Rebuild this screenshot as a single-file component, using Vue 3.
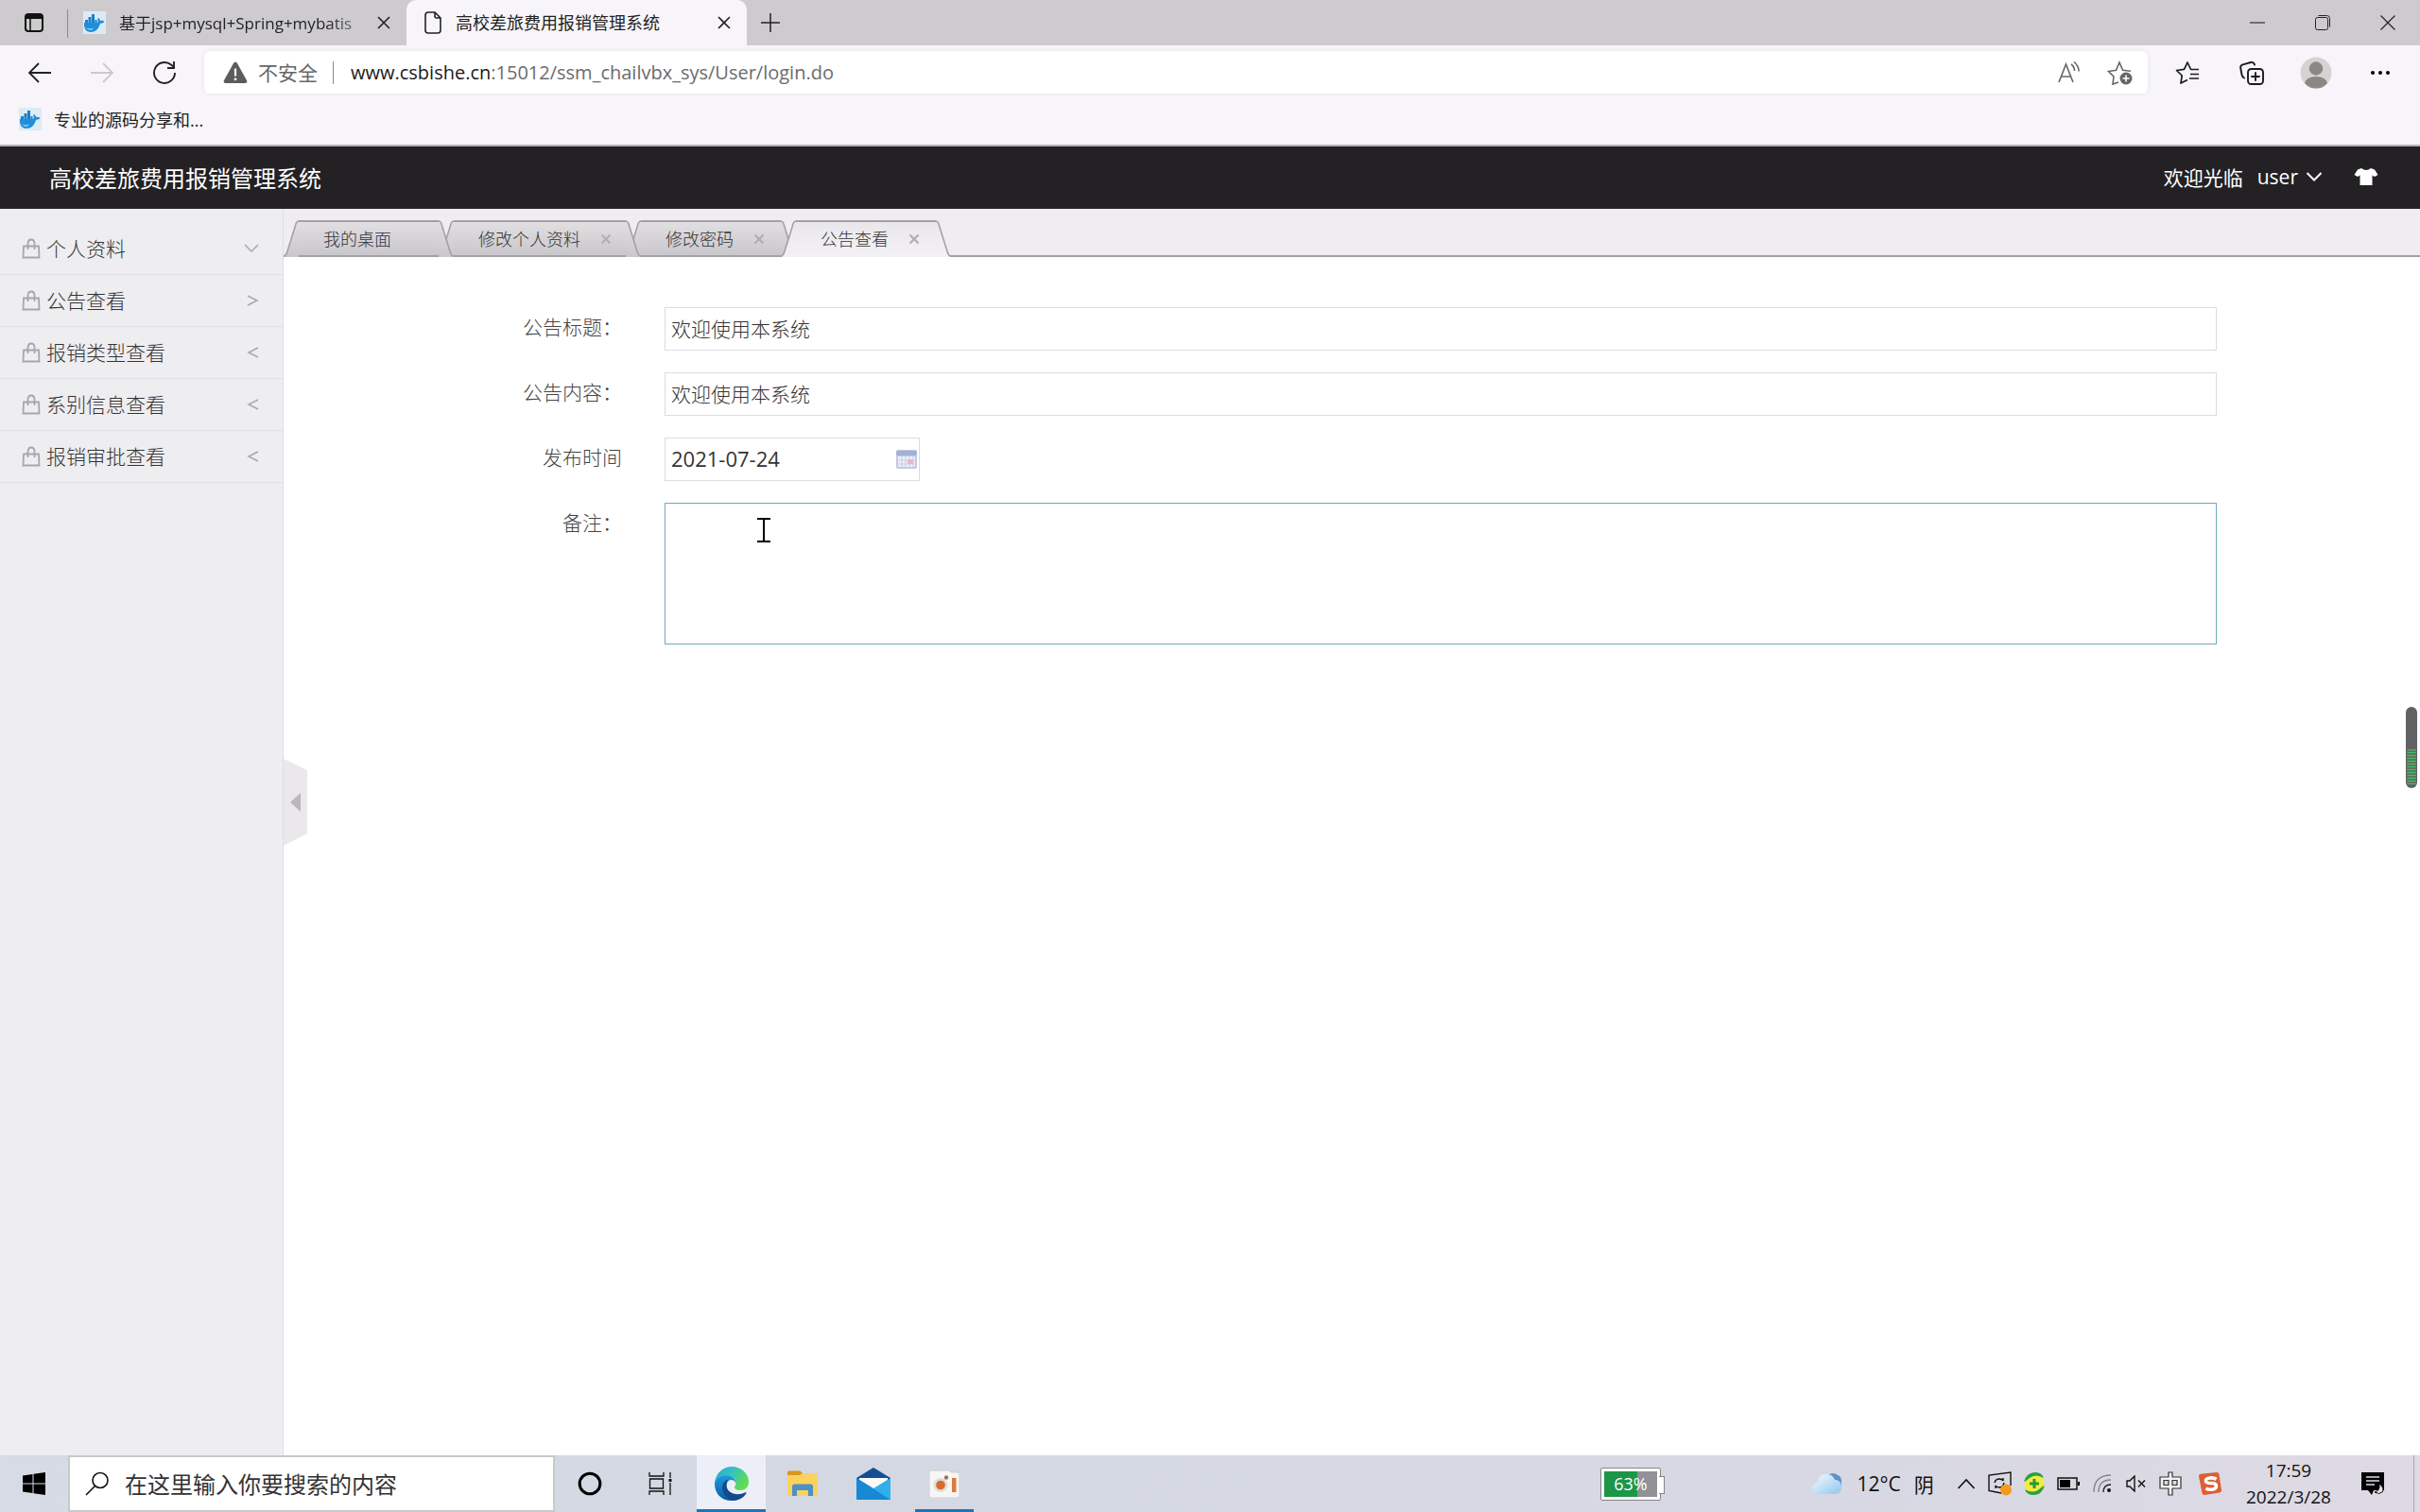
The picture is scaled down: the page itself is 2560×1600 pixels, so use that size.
<script setup>
import { ref } from 'vue'

const menu = [
  { name: '个人资料', arrow: 'down' },
  { name: '公告查看', arrow: 'right' },
  { name: '报销类型查看', arrow: 'left' },
  { name: '系别信息查看', arrow: 'left' },
  { name: '报销审批查看', arrow: 'left' }
]
const arrows = {
  down: 'M3 6l7 7 7-7',
  right: 'M6 5l10 5-10 5',
  left: 'M17 5L7 10l10 5'
}
const tabs = [
  { name: '我的桌面', closable: false },
  { name: '修改个人资料', closable: true },
  { name: '修改密码', closable: true },
  { name: '公告查看', closable: true }
]
const activeTab = 3

const title = ref('欢迎使用本系统')
const content = ref('欢迎使用本系统')
const date = ref('2021-07-24')
const remark = ref('')
</script>

<template>
  <div class="screen">
    <svg class="defs" width="0" height="0" aria-hidden="true">
      <defs>
        <linearGradient id="tabIdle" x1="0" y1="0" x2="0" y2="1">
          <stop offset="0" stop-color="#e2e0e3" /><stop offset="1" stop-color="#c9c7cb" />
        </linearGradient>
        <linearGradient id="tabActive" x1="0" y1="0" x2="0" y2="1">
          <stop offset="0" stop-color="#e9e7ea" /><stop offset="1" stop-color="#f3f1f5" />
        </linearGradient>
        <symbol id="whale" viewBox="0 0 24 24">
          <rect width="24" height="24" fill="#dcebf6" />
          <path d="M1 12h14c1-1 1-3 0-4l1-1c1.500 1 2 2 2 3 2-.5 3.500 0 4.500.8-1 1.500-2.500 2-4.500 2C16.500 19 12.500 22 8 22c-5 0-7.500-4-7-10z" fill="#1f8fdb" />
          <path d="M2 9h3v3H2zM5.500 6h3v6h-3zM9 6h3v6H9zM9 3h3v3H9zM12.500 9h2v3h-2z" fill="#1a7fca" />
          <path d="M3 17c3 2 6 2 8 0-1 3-5 4-8 0z" fill="#cfe6f6" />
        </symbol>
      </defs>
    </svg>

    <div class="tabstrip">
      <button class="workspace" aria-label="标签页操作">
        <svg width="22" height="22" viewBox="0 0 22 22"><rect x="2" y="2" width="18" height="18" rx="3" fill="none" stroke="#111" stroke-width="2" /><path d="M2 7V5q0-3 3-3h12q3 0 3 3v2z" fill="#111" /><path d="M7 7v13" stroke="#111" stroke-width="1.500" /></svg>
      </button>
      <i class="strip-line"></i>
      <div class="btab">
        <svg width="24" height="24"><use href="#whale" /></svg>
        <span class="btab-title faded">基于jsp+mysql+Spring+mybatis</span>
        <button class="bclose" aria-label="关闭标签页"><svg width="16" height="16" viewBox="0 0 16 16"><path d="M2 2l12 12M14 2L2 14" stroke="#222" stroke-width="1.600" /></svg></button>
      </div>
      <div class="btab current">
        <svg width="20" height="24" viewBox="0 0 20 24"><path d="M4 1h8l6 6v13q0 3-3 3H5q-3 0-3-3V4q0-3 3-3zM12 1v4q0 2 2 2h4" fill="none" stroke="#222" stroke-width="1.600" /></svg>
        <span class="btab-title">高校差旅费用报销管理系统</span>
        <button class="bclose" aria-label="关闭标签页"><svg width="16" height="16" viewBox="0 0 16 16"><path d="M2 2l12 12M14 2L2 14" stroke="#222" stroke-width="1.600" /></svg></button>
      </div>
      <button class="newtab" aria-label="新建标签页"><svg width="22" height="22" viewBox="0 0 22 22"><path d="M11 1v20M1 11h20" stroke="#222" stroke-width="1.500" /></svg></button>
      <div class="winbtns">
        <button aria-label="最小化"><svg width="18" height="18" viewBox="0 0 18 18"><path d="M1 9h16" stroke="#111" /></svg></button>
        <button aria-label="还原"><svg width="18" height="18" viewBox="0 0 18 18" fill="none" stroke="#222"><rect x="1.500" y="3.500" width="13" height="13" rx="2" /><path d="M4.500 1.500h9q3 0 3 3v9" /></svg></button>
        <button aria-label="关闭"><svg width="18" height="18" viewBox="0 0 18 18"><path d="M1.500 1.500l15 15M16.500 1.500l-15 15" stroke="#222" stroke-width="1.200" /></svg></button>
      </div>
    </div>

    <div class="toolbar">
      <button class="tool" aria-label="后退"><svg width="26" height="24" viewBox="0 0 26 24" fill="none" stroke="#222" stroke-width="1.800"><path d="M25 12H2M12 2L2 12l10 10" /></svg></button>
      <button class="tool" aria-label="前进"><svg width="26" height="24" viewBox="0 0 26 24" fill="none" stroke="#ccc9ce" stroke-width="1.800"><path d="M1 12h23M14 2l10 10-10 10" /></svg></button>
      <button class="tool" aria-label="刷新"><svg width="26" height="26" viewBox="0 0 26 26" fill="none" stroke="#222" stroke-width="1.900"><path d="M24 13A11 11 0 1 1 20 4.500L23 7M23 1v7h-7" /></svg></button>
      <div class="address">
        <svg width="26" height="26" viewBox="0 0 26 26"><path d="M13 1.500q1.200 0 2 1.500l10 18q1.200 3-1.500 3h-21q-2.700 0-1.500-3L11 3q.8-1.500 2-1.500z" fill="#5c5c5e" /><path d="M13 8.500v8" stroke="#fff" stroke-width="2.200" /><circle cx="13" cy="19.800" r="1.400" fill="#fff" /></svg>
        <span class="unsafe">不安全</span>
        <i class="addr-line"></i>
        <span class="url"><b>www.csbishe.cn</b>:15012/ssm_chailvbx_sys/User/login.do</span>
        <button aria-label="朗读"><svg width="26" height="26" viewBox="0 0 26 26" fill="none" stroke="#666" stroke-width="1.600"><path d="M2 23L9.500 4 17 23M4.800 17h9.500" /><path d="M15 4q3.500 2.500 3.500 7M18 1.500q5 4 5 10" /></svg></button>
        <button aria-label="收藏"><svg width="28" height="28" viewBox="0 0 28 28" fill="none" stroke="#666" stroke-width="1.600"><path d="M12 24l-6 2 1-8-5.500-5.500 8-1.200L13 3l3.600 8.300 8.400 1" /><circle cx="20" cy="20" r="6.500" fill="#666" stroke="none" /><path d="M20 16.500v7M16.500 20h7" stroke="#fff" /></svg></button>
      </div>
      <button class="side" aria-label="收藏夹"><svg width="26" height="26" viewBox="0 0 26 26" fill="none" stroke="#1b1b1b" stroke-width="1.700" stroke-linejoin="round"><path d="M13 20.500L6 24l1.200-8L1.500 10.500l8-1.200L13 2l3.600 7.500H25M16 14.500h9M15 19h10" /></svg></button>
      <button class="side" aria-label="集锦"><svg width="28" height="28" viewBox="0 0 28 28" fill="none" stroke="#1b1b1b" stroke-width="1.900" stroke-linecap="round"><rect x="10" y="10" width="16" height="16" rx="3.500" /><path d="M18 14v8M14 18h8M6 19.500q-2-1-2.500-3.500L2.200 9Q1.700 6 4.500 5.300L13 3q3-.6 4 2.500" /></svg></button>
      <button class="side" aria-label="用户"><svg width="34" height="34" viewBox="0 0 34 34"><circle cx="17" cy="17" r="16.500" fill="#d5d3d1" /><circle cx="17" cy="12.500" r="7.200" fill="#8b8785" /><path d="M5 28q2-7 12-7t12 7q-4.500 5.500-12 5.500T5 28z" fill="#8b8785" /></svg></button>
      <button class="side" aria-label="更多"><svg width="22" height="6" viewBox="0 0 22 6"><circle cx="3" cy="3" r="2" /><circle cx="11" cy="3" r="2" /><circle cx="19" cy="3" r="2" /></svg></button>
    </div>

    <div class="bookmarks">
      <a href="#"><svg width="24" height="24"><use href="#whale" /></svg>专业的源码分享和...</a>
    </div>

    <header class="apphead">
      <h1>高校差旅费用报销管理系统</h1>
      <span class="welcome">欢迎光临</span>
      <button class="user">user<svg width="18" height="12" viewBox="0 0 18 12"><path d="M1.500 2L9 9.500 16.500 2" fill="none" stroke="#fff" stroke-width="2" /></svg></button>
      <button class="skin" aria-label="换肤"><svg width="26" height="20" viewBox="0 0 26 20"><path d="M8 1q5 4 10 0l4 1.500L25.500 8 22 10l-2.500-1.500V19h-13V8.500L4 10 .5 8 4 2.500z" fill="#fff" /></svg></button>
    </header>

    <div class="body">
      <nav class="sidebar">
        <a v-for="m in menu" :key="m.name" href="#">
          <svg width="20" height="22" viewBox="0 0 20 22" fill="none" stroke="#a7a5b0" stroke-width="1.800"><path d="M2 8.500h16l.5 12h-17zM6.500 12V6q0-4.500 3.500-4.500T13.500 6v6" /></svg>
          <span>{{ m.name }}</span>
          <svg width="20" height="20" viewBox="0 0 20 20"><path :d="arrows[m.arrow]" fill="none" stroke="#a9a8ac" stroke-width="1.500" /></svg>
        </a>
      </nav>

      <main class="main">
        <button class="fold" aria-label="收起菜单">
          <svg width="26" height="92" viewBox="0 0 26 92"><path d="M0 0l25 12v67L0 92z" fill="#ebe8ec" /><path d="M7 46l11-10v20z" fill="#b9b7bb" /></svg>
        </button>
        <ul class="tabs">
          <li v-for="(t, i) in tabs" :key="t.name" :class="{ active: i === activeTab }" :style="{ zIndex: i === activeTab ? 9 : 8 - i }">
            <svg width="16" height="39" viewBox="0 0 16 39">
              <path d="M0 39Q3 37 4 33L13 4Q14 .5 16 .5V39z" :fill="i === activeTab ? 'url(#tabActive)' : 'url(#tabIdle)'" />
              <path d="M0 38.500Q3 37 4 33L13 4Q14 1 16 1" fill="none" stroke="#a3a1a6" stroke-width="1.600" />
            </svg>
            <div class="mid">
              <a href="#">{{ t.name }}</a>
              <button v-if="t.closable" aria-label="关闭"><svg width="12" height="12" viewBox="0 0 12 12"><path d="M1.500 1.500l9 9M10.500 1.500l-9 9" stroke="#b1afb3" stroke-width="2.200" /></svg></button>
            </div>
            <svg width="16" height="39" viewBox="0 0 16 39">
              <path d="M16 39Q13 37 12 33L3 4Q2 .5 0 .5V39z" :fill="i === activeTab ? 'url(#tabActive)' : 'url(#tabIdle)'" />
              <path d="M16 38.500Q13 37 12 33L3 4Q2 1 0 1" fill="none" stroke="#a3a1a6" stroke-width="1.600" />
            </svg>
          </li>
        </ul>

        <form class="form" @submit.prevent>
          <label for="title">公告标题：</label>
          <input id="title" v-model="title" type="text">
          <label for="content">公告内容：</label>
          <input id="content" v-model="content" type="text">
          <label for="date">发布时间</label>
          <div class="date">
            <input id="date" v-model="date" type="text">
            <svg width="22" height="20" viewBox="0 0 22 20"><rect width="22" height="20" rx="2" fill="#c3c9e0" /><rect y="1" width="22" height="5" rx="2" fill="#a3b0da" /><rect x="2" y="7" width="18" height="11" fill="#eef1fa" /><path d="M2 11h18M2 15h18M6 7v11M10 7v11M14 7v11M18 7v11" stroke="#c5cce6" /><rect x="12" y="10" width="6" height="5" fill="#e6bcc2" /></svg>
          </div>
          <label for="remark">备注：</label>
          <div class="remark">
            <textarea id="remark" v-model="remark"></textarea>
            <svg class="caret" width="14" height="26" viewBox="0 0 14 26"><path d="M0 1h14M0 25h14M7 1v24" stroke="#000" stroke-width="2" /></svg>
          </div>
        </form>

        <svg class="gauge" width="12" height="86" viewBox="0 0 12 86">
          <rect width="12" height="86" rx="6" fill="#626163" />
          <path d="M6 45v37" stroke="#4fc46c" stroke-width="9" stroke-dasharray="1 2" />
          <rect x="1" y="45" width="10" height="37" fill="#3fae5c" opacity=".3" />
        </svg>
      </main>
    </div>

    <footer class="taskbar">
      <button class="start" aria-label="开始"><svg width="24" height="24" viewBox="0 0 24 24"><path d="M0 3.500l10.500-1.500v9.500H0zM11.500 1.800L24 0v11.500H11.500zM0 12.500h10.500V22L0 20.500zM11.500 12.500H24V24l-12.500-1.800z" /></svg></button>
      <div class="search">
        <svg width="26" height="26" viewBox="0 0 26 26" fill="none" stroke="#111" stroke-width="1.600"><circle cx="16" cy="9.500" r="8" /><path d="M10.500 15.500L1 25" /></svg>
        <input type="text" aria-label="搜索" placeholder="在这里输入你要搜索的内容">
      </div>
      <div class="apps">
        <button class="app" aria-label="Cortana"><svg width="26" height="26" viewBox="0 0 24 24"><circle cx="12" cy="12" r="10" fill="none" stroke="#000" stroke-width="2.800" /></svg></button>
        <button class="app" aria-label="任务视图"><svg width="26" height="24" viewBox="0 0 26 24" fill="none" stroke="#111" stroke-width="1.300"><path d="M1 0v4h15V0M1 24v-4h15v4M1.500 7h14v10h-14zM23 0v6M23 11v13" /><path d="M21.500 7h3v3h-3z" fill="#111" stroke="none" /></svg></button>
        <button class="app focused" aria-label="Edge">
          <svg width="38" height="38" viewBox="0 0 38 38">
            <defs>
              <linearGradient id="eg1" x1="0" y1="0" x2="1" y2=".5"><stop offset="0" stop-color="#2aa5d8" /><stop offset=".5" stop-color="#33c3c0" /><stop offset="1" stop-color="#62dc52" /></linearGradient>
              <linearGradient id="eg2" x1="0" y1="0" x2="0" y2="1"><stop offset="0" stop-color="#1c9ade" /><stop offset="1" stop-color="#0c59a4" /></linearGradient>
            </defs>
            <path d="M1 18C2 8 10 1 19 1c11 0 18 8 18 16 0 6-4 9-9 9-4 0-6-1.500-6-3 0-1 1.500-2 1.500-5 0-4-4-7-9-7C8 11 3 14 1 18z" fill="url(#eg1)" />
            <path d="M1 18c2-5 7-7.500 12-7.500 6 0 10.500 3.500 10.500 8-1-2.500-3-3.500-5-3.500-3 0-5 3-5 6.500 0 8 8 12 15 9.500-3 4-7 6-10 6C8 37 .5 29 1 18z" fill="url(#eg2)" />
            <path d="M13.500 15c-4 3-5 7-4 11 2 7 7 11 12 11 6-.5 11-4 13-8 .3-.8-.3-1-1-.7-9 4.500-20 .7-20-7.800 0-2.200.5-4 1.500-5.500z" fill="#114a8d" />
          </svg>
        </button>
        <button class="app" aria-label="文件资源管理器"><svg width="34" height="28" viewBox="0 0 34 28"><path d="M1 2q0-1.500 1.500-1.500h12L17 3l-2 3H1z" fill="#d9971e" /><path d="M1 5h13l3-2h14q2 0 2 2v20q0 2-2 2H3q-2 0-2-2z" fill="#fbd25e" /><path d="M6 27V17q0-2.500 2.500-2.500h17Q28 14.500 28 17v10h-5v-6H11v6z" fill="#4a91c8" /></svg></button>
        <button class="app" aria-label="邮件"><svg width="36" height="34" viewBox="0 0 36 34"><path d="M0 11L18 0l18 11v8H0z" fill="#124f97" /><path d="M3 11h30v8L18 26 3 19z" fill="#fafafa" /><path d="M0 11l18 11L36 11v23H0z" fill="#2fb0e8" /><path d="M0 11l36 23H0z" fill="#1887d4" /></svg></button>
        <button class="app running" aria-label="录屏"><svg width="32" height="30" viewBox="0 0 32 30"><path d="M0 3q0-2 2-2h19l2 2h7q2 0 2 2v23q0 2-2 2H2q-2 0-2-2z" fill="#f8f6f5" stroke="#ccc" /><circle cx="12" cy="16.500" r="7.500" fill="#ddd" /><circle cx="12" cy="16.500" r="4.800" fill="#dd6a2c" /><circle cx="18" cy="8.500" r="2.200" fill="#a5705a" /><rect x="24" y="9" width="4.500" height="15" fill="#dd7a3e" /></svg></button>
      </div>

      <div class="power">
        <span>63%</span>
      </div>
      <button class="weather">
        <svg width="34" height="24" viewBox="0 0 34 24"><defs><linearGradient id="cl" x1="0" y1="0" x2="1" y2="1"><stop offset="0" stop-color="#f4fbff" /><stop offset="1" stop-color="#8fc6ee" /></linearGradient></defs><path d="M18 3q5-4 10 0 4 1 4 7v6H18z" fill="#5d93c5" /><path d="M7 23q-6 0-6-6 0-5 6-6Q8 2 16 2q7 0 9 6 7 0 7 7.500T25 23z" fill="url(#cl)" /></svg>
        <span>12°C</span><span>阴</span>
      </button>
      <button class="tray" aria-label="显示隐藏的图标"><svg width="20" height="12" viewBox="0 0 20 12"><path d="M1.500 11L10 2l8.500 9" fill="none" stroke="#111" stroke-width="1.600" /></svg></button>
      <button class="tray" aria-label="更新"><svg width="26" height="26" viewBox="0 0 26 26" fill="none" stroke="#111" stroke-width="1.400"><path d="M14 23L1 20.500V4l23-3v14" /><path d="M7 12q1-4 5-4 3 0 4 2V7M17 12q-1 5-5 5-3 0-4-2v3" /><circle cx="19" cy="19.500" r="6" fill="#f59a1b" stroke="none" /></svg></button>
      <button class="tray" aria-label="安全卫士"><svg width="24" height="24" viewBox="0 0 24 24"><circle cx="12" cy="12" r="10.500" fill="#f6ea3d" /><path d="M1 10Q4 0 13 0q7 0 9 6-9-5-15 0-3 3-6 4zM23 14q-3 10-12 10-7 0-9-6 9 5 15 0 3-3 6-4z" fill="#27a045" /><path d="M12 7v10M7 12h10" stroke="#1f9b3d" stroke-width="3" /></svg></button>
      <button class="tray" aria-label="电池"><svg width="24" height="14" viewBox="0 0 24 14"><rect x="1" y="1" width="20" height="12" fill="none" stroke="#111" stroke-width="1.500" /><rect x="3" y="3" width="11" height="8" /><path d="M22 5h2v4h-2z" /></svg></button>
      <button class="tray" aria-label="网络"><svg width="20" height="20" viewBox="0 0 20 20" fill="none" stroke="#85858c" stroke-width="1.400"><path d="M1 19Q1 1 19 1M6 19Q6 6 19 6" /><path d="M11 19q0-8 8-8" stroke="#222" /><circle cx="17" cy="17" r="2" fill="#111" stroke="none" /></svg></button>
      <button class="tray" aria-label="静音"><svg width="22" height="18" viewBox="0 0 22 18" fill="none" stroke="#111" stroke-width="1.400"><path d="M1 6h3l5-5v16l-5-5H1zM13 5.500l7 7M20 5.500l-7 7" /></svg></button>
      <button class="tray" aria-label="输入法"><svg width="24" height="26" viewBox="0 0 24 26"><path d="M10 1h4v5h9v12h-9v7h-4v-7H1V6h9zM5 9.500v5h5v-5zM14 9.500v5h5v-5z" fill="#f3f3f6" stroke="#333" stroke-width="1.200" fill-rule="evenodd" /></svg></button>
      <button class="tray wide" aria-label="搜狗输入法"><svg width="26" height="26" viewBox="0 0 26 26"><path d="M1 5q0-2 2-2.300L20 1q2 0 2.500 2L25 20q0 2-2 2.500L7 25q-2 0-2.500-2z" fill="#dc5f35" /><path d="M19.500 8.500Q17 6.500 13 7q-5 .6-4.500 3.500.4 2 5.500 2 5.500 0 5.500 3 0 3.200-5 3.700-3.500.3-6-1.200" fill="none" stroke="#fff" stroke-width="3.600" /></svg></button>
      <button class="clock"><span>17:59</span><span>2022/3/28</span></button>
      <button class="notice" aria-label="通知"><svg width="26" height="26" viewBox="0 0 26 26"><path d="M1 1h24v19H14l-2 5-4-5H1z" /><path d="M6 6h14M6 10h14M6 14h9" stroke="#dedce3" stroke-width="1.400" /><path d="M20 13q6 5 3 9-3 3-8 0 6-1 5-9z" fill="#e6e4ea" stroke="#111" /></svg></button>
      <i class="peek"></i>
    </footer>
  </div>
</template>

<style>
body {
  margin: 0;
}
</style>

<style scoped>
.screen {
  display: flex;
  flex-direction: column;
  min-height: 100vh;
  font-family: "Open Sans", "Noto Sans CJK SC", sans-serif;
  font-size: 21px;
  color: #333;
  background: #fff;
}
.defs {
  position: absolute;
}
.screen * {
  box-sizing: border-box;
}
button {
  display: flex;
  align-items: center;
  justify-content: center;
  flex: none;
  margin: 0;
  padding: 0;
  border: 0;
  background: none;
  font: inherit;
  color: inherit;
}
svg {
  display: block;
  flex: none;
}
a {
  color: inherit;
  text-decoration: none;
}
input,
textarea {
  font: inherit;
  color: inherit;
  border-radius: 0;
  outline: 0;
}

/* browser chrome */
.tabstrip {
  display: flex;
  height: 48px;
  background: #cdcbce;
  font-size: 18px;
  color: #222;
}
.workspace {
  width: 71px;
}
.strip-line {
  width: 1px;
  height: 30px;
  margin-top: 10px;
  background: #8c8a8e;
}
.btab {
  display: flex;
  align-items: center;
  width: 358px;
  padding: 0 12px 0 16px;
}
.btab.current {
  width: 360px;
  padding-left: 18px;
  background: #f7f5f9;
  border-radius: 10px 10px 0 0;
}
.btab-title {
  flex: 1;
  min-width: 0;
  margin-left: 14px;
  padding-bottom: 2px;
  white-space: nowrap;
}
.faded {
  font-size: 17px;
  mask-image: linear-gradient(to right, #000 82%, rgba(0, 0, 0, .2) 100%);
}
.bclose {
  width: 24px;
}
.newtab {
  width: 50px;
}
.winbtns {
  display: flex;
  margin-left: auto;
}
.winbtns button {
  width: 69px;
}
.toolbar {
  display: flex;
  align-items: center;
  height: 57px;
  padding: 0 8px 0 9px;
  background: #f7f5f9;
}
.tool {
  width: 66px;
}
.side {
  width: 68px;
}
.address {
  display: flex;
  flex: 1;
  align-items: center;
  height: 45px;
  margin: 0 8px 0 9px;
  padding: 0 15px 0 20px;
  background: #fff;
  border-radius: 6px;
  box-shadow: 0 0 4px #e6e4e8;
}
.unsafe {
  margin-left: 11px;
  padding-bottom: 2px;
  color: #666;
}
.addr-line {
  width: 1px;
  height: 24px;
  margin: 0 18px 0 16px;
  background: #8c8a8e;
}
.url {
  flex: 1;
  font-size: 20px;
  color: #6b6b6d;
}
.url b {
  font-weight: 400;
  color: #1b1b1b;
}
.address button {
  width: 28px;
  margin-left: 26px;
}
.bookmarks {
  display: flex;
  align-items: center;
  height: 50px;
  padding: 0 20px 6px;
  background: #f7f5f9;
  border-bottom: 2px solid #b5b3b7;
  font-size: 18px;
  color: #222;
}
.bookmarks a {
  display: flex;
  align-items: center;
  gap: 13px;
}

/* application */
.apphead {
  display: flex;
  align-items: center;
  height: 66px;
  padding: 0 44px 2px 52px;
  background: #232124;
  color: #fff;
}
.apphead h1 {
  flex: 1;
  margin: 0;
  font-size: 24px;
  font-weight: 400;
}
.user {
  gap: 8px;
  margin: 0 33px 0 15px;
}
.body {
  display: flex;
  flex: 1;
}
.sidebar {
  width: 300px;
  padding-top: 15px;
  background: #eeedf0;
  border-right: 1px solid #e0dee2;
  font-weight: 300;
}
.sidebar a {
  display: flex;
  align-items: center;
  gap: 6px;
  height: 55px;
  padding: 0 23px;
  border-bottom: 1px solid #e1e0e4;
}
.sidebar span {
  flex: 1;
  padding-bottom: 3px;
}
.main {
  position: relative;
  flex: 1;
  min-width: 0;
}
.fold {
  position: absolute;
  top: 582px;
  left: 0;
}
.gauge {
  position: absolute;
  top: 527px;
  right: 3px;
}
.tabs {
  display: flex;
  align-items: flex-end;
  height: 51px;
  margin: 0;
  padding: 0;
  list-style: none;
  background: linear-gradient(#a3a1a6, #a3a1a6) bottom / 100% 2px no-repeat #f0edf1;
  font-size: 18px;
  font-weight: 300;
}
.tabs li {
  position: relative;
  display: flex;
  height: 39px;
}
.tabs li + li {
  margin-left: -16px;
}
.mid {
  display: flex;
  align-items: center;
  gap: 18px;
  min-width: 148px;
  padding: 0 12px 0 26px;
  border-top: 2px solid #a3a1a6;
  border-bottom: 2px solid #a3a1a6;
  background: linear-gradient(#e1dfe2, #c9c7cb);
}
.mid a {
  padding-bottom: 2px;
}
.active .mid {
  border-bottom-color: #f3f1f5;
  background: linear-gradient(#e9e7ea, #f3f1f5);
}
.mid button {
  width: 18px;
}
.form {
  display: grid;
  grid-template-columns: 358px 1fr;
  gap: 23px 45px;
  padding: 53px 215px 0 0;
  font-weight: 300;
}
.form label {
  line-height: 42px;
  text-align: right;
  color: #444;
}
.form input {
  display: block;
  width: 100%;
  height: 46px;
  padding: 0 6px 2px;
  border: 1px solid #dcdbde;
  background: #fff;
}
.date {
  display: flex;
  align-items: center;
  width: 270px;
}
.form .date input {
  padding-right: 30px;
  font-size: 22px;
  font-weight: 400;
}
.date svg {
  margin-left: -25px;
}
.remark {
  position: relative;
}
.remark textarea {
  display: block;
  width: 100%;
  height: 150px;
  border: 1px solid #6fa9be;
  resize: none;
  background: #fff;
}
.caret {
  position: absolute;
  top: 16px;
  left: 98px;
}

/* taskbar */
.taskbar {
  display: flex;
  height: 60px;
  background: linear-gradient(to right, #d6dbe6, #d3d8e2 30%, #d7d8e3 75%, #dedae3);
  color: #111;
}
.start {
  width: 72px;
}
.search {
  display: flex;
  align-items: center;
  width: 515px;
  padding-left: 16px;
  border: 2px solid #c8c8ce;
  background: #fff;
}
.search input {
  flex: 1;
  height: 100%;
  margin-left: 16px;
  padding: 0;
  border: 0;
  font-size: 24px;
}
.search input::placeholder {
  color: #333;
  opacity: 1;
}
.apps {
  display: flex;
  gap: 2px;
}
.app {
  width: 73px;
  border: solid transparent;
  border-width: 3px 0;
}
.focused {
  background: #eceff7;
  border-top-color: #eceff7;
  border-bottom-color: #1975bd;
}
.running {
  width: 62px;
  margin-left: 6px;
  border-bottom-color: #1975bd;
}
.power {
  position: relative;
  align-self: center;
  width: 64px;
  height: 35px;
  margin: 0 145px 0 auto;
  padding: 3px;
  border: 1px solid #85858a;
  border-radius: 2px;
  background: #fff;
}
.power::after {
  content: "";
  position: absolute;
  top: 8px;
  right: -5px;
  width: 5px;
  height: 17px;
  border: 1px solid #85858a;
  border-left: 0;
  background: #fff;
}
.power span {
  display: block;
  height: 100%;
  font-size: 18px;
  line-height: 26px;
  text-align: center;
  color: #fff;
  background: linear-gradient(to right, #1d9647 63%, #919197 63%);
}
.weather {
  gap: 14px;
  width: 160px;
  padding-right: 2px;
}
.tray {
  width: 36px;
}
.tray.wide {
  width: 48px;
}
.clock {
  flex-direction: column;
  width: 118px;
  font-size: 19px;
  line-height: 28px;
}
.notice {
  width: 60px;
}
.peek {
  width: 1px;
  margin: 0 6px 0 13px;
  background: #aaa8b0;
}
</style>
